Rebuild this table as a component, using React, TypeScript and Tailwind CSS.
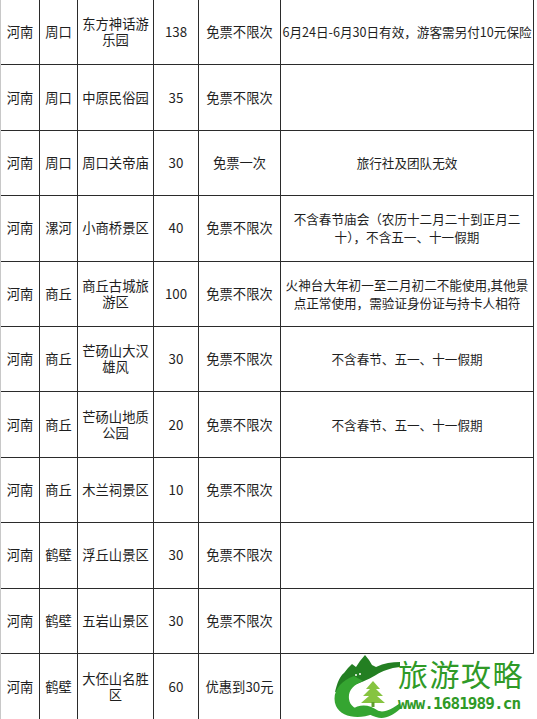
import React from 'react';

type Row = {
  province: string;
  city: string;
  name: string;
  price: string;
  policy: string;
  notes: string[];
};

const rows: Row[] = [
  { province: '河南', city: '周口', name: '东方神话游乐园', price: '138', policy: '免票不限次', notes: ['6月24日-6月30日有效，游客需另付10元保险'] },
  { province: '河南', city: '周口', name: '中原民俗园', price: '35', policy: '免票不限次', notes: [] },
  { province: '河南', city: '周口', name: '周口关帝庙', price: '30', policy: '免票一次', notes: ['旅行社及团队无效'] },
  { province: '河南', city: '漯河', name: '小商桥景区', price: '40', policy: '免票不限次', notes: ['不含春节庙会（农历十二月二十到正月二', '十），不含五一、十一假期'] },
  { province: '河南', city: '商丘', name: '商丘古城旅游区', price: '100', policy: '免票不限次', notes: ['火神台大年初一至二月初二不能使用,其他景', '点正常使用，需验证身份证与持卡人相符'] },
  { province: '河南', city: '商丘', name: '芒砀山大汉雄风', price: '30', policy: '免票不限次', notes: ['不含春节、五一、十一假期'] },
  { province: '河南', city: '商丘', name: '芒砀山地质公园', price: '20', policy: '免票不限次', notes: ['不含春节、五一、十一假期'] },
  { province: '河南', city: '商丘', name: '木兰祠景区', price: '10', policy: '免票不限次', notes: [] },
  { province: '河南', city: '鹤壁', name: '浮丘山景区', price: '30', policy: '免票不限次', notes: [] },
  { province: '河南', city: '鹤壁', name: '五岩山景区', price: '30', policy: '免票不限次', notes: [] },
  { province: '河南', city: '鹤壁', name: '大伾山名胜区', price: '60', policy: '优惠到30元', notes: [] },
];

function Cell({ children, last, wide }: { children?: React.ReactNode; last: boolean; wide?: boolean }) {
  return (
    <div
      className={`flex items-center justify-center text-center border-r border-[#2b2b2b] ${
        last ? '' : 'border-b'
      } ${wide ? 'text-[12.6px] leading-[18px] px-0' : 'text-[13.3px] leading-[16px] px-[3px]'}`}
    >
      {children}
    </div>
  );
}

function Logo() {
  return (
    <svg width="68" height="65" viewBox="0 0 68 65">
      {/* mountains */}
      <path
        d="M3 38 C5 29 8 22 12 19 L16 14 L20 10 L24 13 L28 7 L33 1 L37 6 L40 11 L44 13 C52 9 60 8 68 8 L68 13 C58 14 50 17 44 21 C36 26 26 29 18 33 C11 35 6 38 3 38 Z"
        fill="#237f22"
      />
      <circle cx="24" cy="21" r="1" fill="#fff" />
      <circle cx="28" cy="20" r="1" fill="#fff" />
      {/* G swoosh */}
      <path
        d="M22 22 C7 27 -1 40 4 52 C9 63 26 66 41 60 L38 56 C26 58 18 53 17 45 C16 37 21 31 31 27 Z"
        fill="#35a531"
      />
      {/* tree */}
      <path
        d="M41 27 L48 35 L44 35 L51 42 L45 42 L53 49 L29 49 L37 42 L31 42 L38 35 L34 35 Z"
        fill="#86c440"
      />
      <rect x="39.5" y="48" width="3" height="5" fill="#5f9f2c" />
      {/* S swoosh */}
      <path
        d="M19 56 C28 49 38 51 45 56 C51 60 60 55 68 49 L68 55 C60 62 52 66 44 63 C36 60 29 57 19 56 Z"
        fill="#35a531"
      />
    </svg>
  );
}

export default function App() {
  return (
    <div className="relative w-[537px] h-[719px] overflow-hidden bg-white text-[#1e1e1e] font-['Noto_Sans_CJK_SC',sans-serif]">
      <div className="grid grid-cols-[39px_38px_76px_45px_82px_253px] auto-rows-[65.4px] w-[534px] border-l border-[#c8c8c8]">
        {rows.map((r, i) => {
          const last = i === rows.length - 1;
          return (
            <React.Fragment key={i}>
              <Cell last={last}>{r.province}</Cell>
              <Cell last={last}>{r.city}</Cell>
              <Cell last={last}>{r.name}</Cell>
              <Cell last={last}>{r.price}</Cell>
              <Cell last={last}>{r.policy}</Cell>
              <Cell last={last} wide>
                <div className="whitespace-nowrap">
                  {r.notes.map((n, j) => (
                    <div key={j}>{n}</div>
                  ))}
                </div>
              </Cell>
            </React.Fragment>
          );
        })}
      </div>

      {/* watermark */}
      <div className="absolute left-[332px] top-[654px] right-0 bottom-0 bg-white flex items-start">
        <Logo />
        <div className="flex flex-col -ml-[2px] text-[#2f9a27]">
          <div className="text-[30px] leading-[39px] tracking-[1.5px]">旅游攻略</div>
          <div className="mt-[2px] text-[16px] leading-[17px] font-bold font-['DejaVu_Sans_Mono',monospace] tracking-[-0.9px]">
            www.1681989.cn
          </div>
        </div>
      </div>
    </div>
  );
}
